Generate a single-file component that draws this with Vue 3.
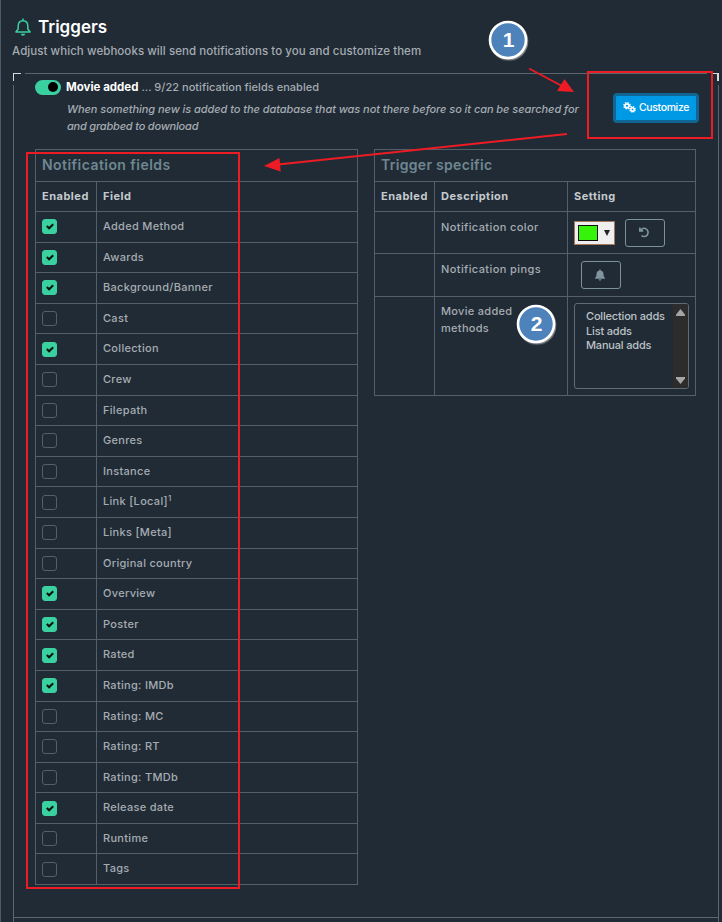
<script setup>
const fields = [
  ['Added Method', 1], ['Awards', 1], ['Background/Banner', 1], ['Cast', 0], ['Collection', 1],
  ['Crew', 0], ['Filepath', 0], ['Genres', 0], ['Instance', 0], ['Link [Local]', 0, '1'],
  ['Links [Meta]', 0], ['Original country', 0], ['Overview', 1], ['Poster', 1], ['Rated', 1],
  ['Rating: IMDb', 1], ['Rating: MC', 0], ['Rating: RT', 0], ['Rating: TMDb', 0],
  ['Release date', 1], ['Runtime', 0], ['Tags', 0],
]
const methods = ['Collection adds', 'List adds', 'Manual adds']
</script>

<template>
  <main class="page">
    <header class="heading">
      <h1>
        <svg class="bell" viewBox="0 0 16 18" width="16" height="18">
          <path d="M8 .4V3M3.200 8.100C3.200 4.800 5.200 2.700 8 2.700s4.800 2.100 4.800 5.400v2.900l2.300 3H.9l2.300-3z" fill="none" stroke="#3bd0a0" stroke-width="1.500" stroke-linejoin="round" />
          <path d="M5.700 15.700h4.600Q9.800 17.800 8 17.800T5.700 15.700z" fill="#3bd0a0" />
        </svg>
        <span>Triggers</span>
      </h1>
      <p>Adjust which webhooks will send notifications to you and customize them</p>
    </header>

    <section class="panel">
      <i class="edge top"></i><i class="edge left"></i><i class="edge right"></i><i class="edge bottom"></i>
      <i class="corner cl"></i><i class="corner cr"></i>

      <div class="trigger">
        <div class="info">
          <div class="summary">
            <span class="toggle"><i></i></span>
            <b>Movie added</b><span class="count">... 9/22 notification fields enabled</span>
          </div>
          <p class="about"><span class="l1">When something new is added to the database that was not there before so it can be searched for</span><br><span class="l2">and grabbed to download</span></p>
        </div>
        <button class="customize">
          <svg viewBox="0 0 13 11" width="13" height="11">
            <g fill="none" stroke="#fff">
              <circle cx="4" cy="3.800" r="2" stroke-width="1.800" />
              <circle cx="4" cy="3.800" r="3.200" stroke-width="1.200" stroke-dasharray="1.500 1.010" />
              <circle cx="9.500" cy="7.400" r="1.700" stroke-width="1.600" />
              <circle cx="9.500" cy="7.400" r="2.800" stroke-width="1.100" stroke-dasharray="1.300 .9" />
            </g>
          </svg>
          <span>Customize</span>
        </button>
      </div>

      <div class="tables">
        <div class="table notif">
          <div class="title"><span>Notification fields</span></div>
          <div class="row head"><div>Enabled</div><div>Field</div></div>
          <div v-for="f in fields" :key="f[0]" class="row item">
            <div>
              <span class="check" :class="{ on: f[1] }">
                <svg v-if="f[1]" viewBox="0 0 15 15" width="15" height="15"><path d="M4.800 7l2.300 2.300 4.100-4.100" fill="none" stroke="#07130f" stroke-width="2" /></svg>
              </span>
            </div>
            <div>{{ f[0] }}<sup v-if="f[2]">{{ f[2] }}</sup></div>
          </div>
        </div>

        <div class="table specific">
          <div class="title"><span>Trigger specific</span></div>
          <div class="row head"><div>Enabled</div><div>Description</div><div>Setting</div></div>
          <div class="row color">
            <div></div>
            <div>Notification color</div>
            <div class="controls">
              <span class="picker"><i></i><svg viewBox="0 0 6 6" width="6" height="6"><path d="M0 0h6L3 6z" fill="#222" /></svg></span>
              <button class="ghost">
                <svg viewBox="0 0 11 11" width="11" height="11"><path d="M.8.600v3.300h3.400M1.300 3.600A4.100 4.100 0 1 1 2.500 8.700" fill="none" stroke="#7f949d" stroke-width="1.600" /></svg>
              </button>
            </div>
          </div>
          <div class="row pings">
            <div></div>
            <div>Notification pings</div>
            <div class="controls">
              <button class="ghost">
                <svg viewBox="0 0 10 12" width="10" height="12"><path d="M4.400.5h1.200v.9C7.700 1.800 8.500 3.300 8.500 5c0 2 .5 3 1.500 4v.7H0V9c1-1 1.500-2 1.500-4 0-1.700.8-3.200 2.900-3.600zM3.600 10.300h2.800Q6.200 11.700 5 11.700t-1.400-1.400z" fill="#7f949d" /></svg>
              </button>
            </div>
          </div>
          <div class="row methods">
            <div></div>
            <div>Movie added<br>methods</div>
            <div>
              <div class="listbox">
                <ul><li v-for="m in methods" :key="m">{{ m }}</li></ul>
                <div class="scroll">
                  <svg viewBox="0 0 9 7" width="9" height="7"><path d="M4.500 0L9 5.500V7H0V5.500z" fill="#a5a5a5" /></svg>
                  <svg viewBox="0 0 9 7" width="9" height="7"><path d="M4.500 7L9 1.500V0H0v1.500z" fill="#a5a5a5" /></svg>
                </div>
              </div>
            </div>
          </div>
        </div>
      </div>
    </section>

    <svg class="notes" viewBox="0 0 722 922" width="722" height="922">
      <defs>
        <filter id="shade" x="-20%" y="-20%" width="150%" height="150%">
          <feDropShadow dx="1" dy="1.300" stdDeviation=".7" flood-color="#aaa" flood-opacity=".7" />
        </filter>
      </defs>
      <g fill="none" stroke="#ed1c24" stroke-width="2">
        <rect x="588" y="72" width="124" height="66" />
        <rect x="27" y="153" width="212" height="735" />
        <path d="M529 68.500L562 86M567 134L278 164.500" stroke-width="1.800" />
      </g>
      <path d="M574 92L564.500 79 557 91z M264 166l15.500-8 1.200 13.500z" fill="#ed1c24" />
      <g v-for="n in [{ x: 508, y: 40, t: '1' }, { x: 536, y: 324, t: '2' }]" :key="n.t">
        <circle :cx="n.x" :cy="n.y" r="18" fill="#4d82ba" stroke="#fff" stroke-width="2.600" filter="url(#shade)" />
        <text :x="n.x + .6" :y="n.y + 7.300" class="num">{{ n.t }}</text>
      </g>
    </svg>
  </main>
</template>

<style>
body { background: #202b36; }
</style>

<style scoped>
* { box-sizing: border-box; }
.page { position: relative; width: 722px; height: 922px; overflow: hidden; background: #202b36; border-left: 1px solid #4e5a64; font-family: Inter, "Liberation Sans", sans-serif; font-size: 11px; font-weight: 500; color: #a6acb1; display: flex; flex-direction: column; }
.heading { height: 73px; padding: 17px 0 0 11px; }
h1 { margin: 0; display: flex; align-items: center; gap: 7px; height: 20px; color: #fff; font-size: 17px; font-weight: 600; letter-spacing: 0; white-space: nowrap; }
.bell { margin-left: 3px; }
.heading p { margin: 6px 0 0; line-height: 17px; font-size: 11.500px; letter-spacing: .065px; white-space: nowrap; }
.panel { position: relative; width: 706px; height: 849px; margin-left: 12px; }
.edge, .corner { position: absolute; background: #5b666f; }
.top { left: 12px; right: 12px; top: 0; height: 1px; }
.left { left: 0; top: 12px; bottom: 0; width: 1px; }
.right { right: 0; top: 12px; bottom: 0; width: 1px; }
.bottom { left: 0; right: 1px; top: 844px; height: 1px; }
.corner { width: 8px; height: 8px; top: 0; background: none; border-top: 1px solid #d5dadd; }
.cl { left: 0; border-left: 1px solid #d5dadd; }
.cr { right: 0; border-right: 2px solid #d5dadd; }
.trigger { display: flex; justify-content: space-between; height: 76px; padding: 6px 20px 0 22px; }
.summary { display: flex; align-items: center; height: 16px; white-space: nowrap; }
.toggle { width: 26px; height: 15px; border-radius: 8px; background: #3bd0a0; margin-right: 5px; padding: 2.500px 3px; display: flex; justify-content: flex-end; }
.toggle i { width: 10px; height: 10px; border-radius: 50%; background: #000; }
b { color: #fff; font-size: 11.500px; font-weight: 700; margin-right: 3px; }
.count { letter-spacing: .03px; }
.about { margin: 6px 0 0 32px; line-height: 17px; font-style: italic; white-space: nowrap; }
.l1 { letter-spacing: -.06px; }
.l2 { letter-spacing: -.2px; }
.customize { margin: 14px 0 0; width: 86px; height: 30px; flex: none; border: 3px solid #126694; border-radius: 4px; background: #0099e5; color: #fff; padding: 0 0 1px; display: flex; align-items: center; justify-content: center; gap: 3px; font: 500 10.500px Inter, sans-serif; letter-spacing: -.35px; }
.tables { display: flex; align-items: flex-start; gap: 16px; padding-left: 22px; }
.table { border: 1px solid #535f69; border-bottom: 0; }
.notif { width: 323px; }
.specific { width: 322px; }
.title { height: 32px; border-bottom: 1px solid #535f69; padding-left: 6px; line-height: 29px; font-size: 14px; font-weight: 600; color: #6f8791; letter-spacing: .45px; }
.specific .title { letter-spacing: .3px; }
.row { display: grid; border-bottom: 1px solid #535f69; white-space: nowrap; letter-spacing: .3px; }
.row > div { padding-left: 6px; }
.row > div + div { border-left: 1px solid #535f69; }
.notif .row { grid-template-columns: 60px 1fr; }
.specific .row { grid-template-columns: 59px 133px 1fr; }
.row.head { height: 30px; line-height: 29px; color: #c5cacd; font-weight: 700; letter-spacing: .5px; }
.item { height: 30.600px; line-height: 29.400px; }
.item > div:first-child { display: flex; align-items: center; }
.check { width: 15px; height: 15px; border: 1px solid #535f69; border-radius: 3px; display: block; }
.check.on { background: #3bd0a0; border-color: #3bd0a0; }
.check svg { display: block; margin: -1px; }
sup { font-size: 8px; line-height: 0; vertical-align: 4px; }
.color { height: 42px; }
.pings { height: 43px; }
.methods { height: 99px; }
.color > div:nth-child(2), .pings > div:nth-child(2) { padding-top: 7px; line-height: 17px; letter-spacing: .4px; }
.methods > div:nth-child(2) { padding-top: 6px; line-height: 17px; }
.controls { display: flex; align-items: flex-start; }
.picker { width: 41px; height: 24px; margin-top: 9px; border: 1px solid #a17a5d; background: #efefef; display: flex; align-items: center; padding-left: 3px; gap: 6px; }
.picker i { width: 20px; height: 16px; background: #37f20a; border: 1px solid #111; }
.ghost { width: 40px; height: 28px; margin: 7px 0 0 10px; border: 1px solid #7b919b; border-radius: 3px; background: none; padding: 0 2px 2px 0; display: flex; align-items: center; justify-content: center; }
.pings .ghost { margin: 7px 0 0 7px; padding: 0 2px 0 0; }
.listbox { margin-top: 6px; width: 115px; height: 86px; border: 1px solid #606b74; border-radius: 3px; display: flex; justify-content: space-between; overflow: hidden; }
ul { margin: 0; padding: 5px 0 0 11px; list-style: none; line-height: 14.500px; color: #bdc2c5; letter-spacing: -.18px; }
.scroll { width: 15px; background: #2c2c2c; display: flex; flex-direction: column; align-items: center; justify-content: space-between; padding: 5px 0 4px; flex: none; }
.notes { position: absolute; left: -1px; top: 0; pointer-events: none; }
.num { font: bold 21px "Liberation Sans", sans-serif; fill: #fff; text-anchor: middle; }
</style>
